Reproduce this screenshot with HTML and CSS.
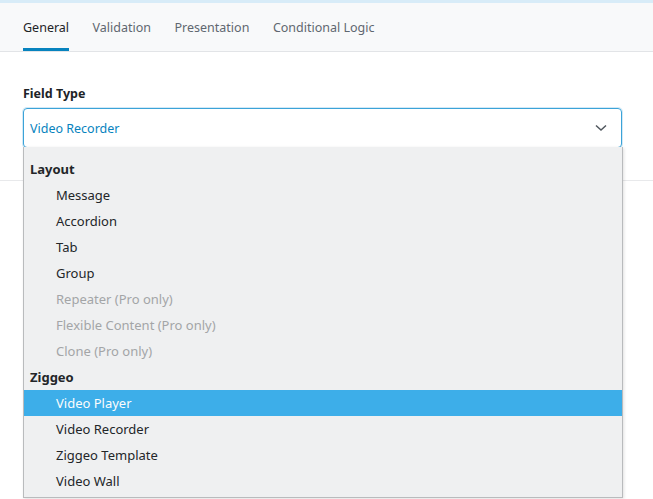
FILE: index.html
```html
<!DOCTYPE html>
<html>
<head>
<meta charset="utf-8">
<link rel="stylesheet" href="styles.css">
</head>
<body>
<div class="page">
<div class="topline"></div>
<nav class="tabs">
  <a class="tab active">General</a>
  <a class="tab">Validation</a>
  <a class="tab">Presentation</a>
  <a class="tab">Conditional Logic</a>
</nav>
<section class="panel">
  <div class="field">
    <label class="label">Field Type</label>
    <div class="select">
      <span class="value">Video Recorder</span>
      <svg class="chevron" width="12" height="8" viewBox="0 0 12 8"><path d="M1 1.5 L6 6 L11 1.5" fill="none" stroke="#50575e" stroke-width="1.5"/></svg>
    </div>
    <ul class="menu">
      <li class="group">Layout</li>
      <li class="opt">Message</li>
      <li class="opt">Accordion</li>
      <li class="opt">Tab</li>
      <li class="opt">Group</li>
      <li class="opt disabled">Repeater (Pro only)</li>
      <li class="opt disabled">Flexible Content (Pro only)</li>
      <li class="opt disabled">Clone (Pro only)</li>
      <li class="group">Ziggeo</li>
      <li class="opt selected">Video Player</li>
      <li class="opt">Video Recorder</li>
      <li class="opt">Ziggeo Template</li>
      <li class="opt">Video Wall</li>
    </ul>
  </div>
</section>
</div>
</body>
</html>
```

FILE: styles.css
```css
html, body {
  margin: 0;
  padding: 0;
  background: #ffffff;
  font-family: "Noto Sans", "Open Sans", sans-serif;
}
.page {
  height: 499px;
  overflow: hidden;
}
.topline {
  height: 3px;
  background: #d8ecf8;
}
.tabs {
  display: flex;
  gap: 23.5px;
  height: 49px;
  padding: 0 23px;
  background: #f8f9fa;
  border-bottom: 1px solid #e2e4e7;
  box-sizing: border-box;
}
.tab {
  display: flex;
  align-items: center;
  height: 48px;
  box-sizing: border-box;
  font-size: 12.5px;
  color: #5f6770;
  border-bottom: 3px solid transparent;
  padding-top: 3px;
}
.tab.active {
  color: #1d2327;
  border-bottom-color: #0783be;
}
.panel {
  height: 128px;
  border-bottom: 1px solid #e8e9eb;
  padding: 0 31px 0 23px;
}
.field {
  position: relative;
  padding-top: 34px;
}
.label {
  display: block;
  font-size: 12.5px;
  font-weight: 700;
  color: #1d2327;
  line-height: 16px;
  margin-bottom: 6px;
}
.select {
  display: flex;
  align-items: center;
  justify-content: space-between;
  height: 40px;
  box-sizing: border-box;
  padding: 0 14px 0 6px;
  border: 1px solid #3ba3d8;
  border-radius: 4px;
  box-shadow: 0 0 0 1px #d3e9f6;
}
.value {
  font-size: 12.5px;
  color: #0783be;
}
.chevron {
  display: block;
}
.menu {
  position: absolute;
  z-index: 5;
  left: 0;
  top: 95px;
  width: 600px;
  box-sizing: border-box;
  margin: 0;
  padding: 9px 0 3px;
  list-style: none;
  background: #eff0f1;
  border: 1px solid #b9bbbd;
  border-top: none;
  box-shadow: 1px 1px 3px rgba(0,0,0,0.12);
  font-size: 13px;
}
.menu li {
  height: 26px;
  line-height: 26px;
  color: #232629;
  white-space: nowrap;
}
.menu .group {
  font-weight: 700;
  padding-left: 6px;
}
.menu .opt {
  padding-left: 32px;
}
.menu .disabled {
  color: #a3a5a7;
}
.menu .selected {
  background: #3daee9;
  color: #fcfcfc;
}
```
